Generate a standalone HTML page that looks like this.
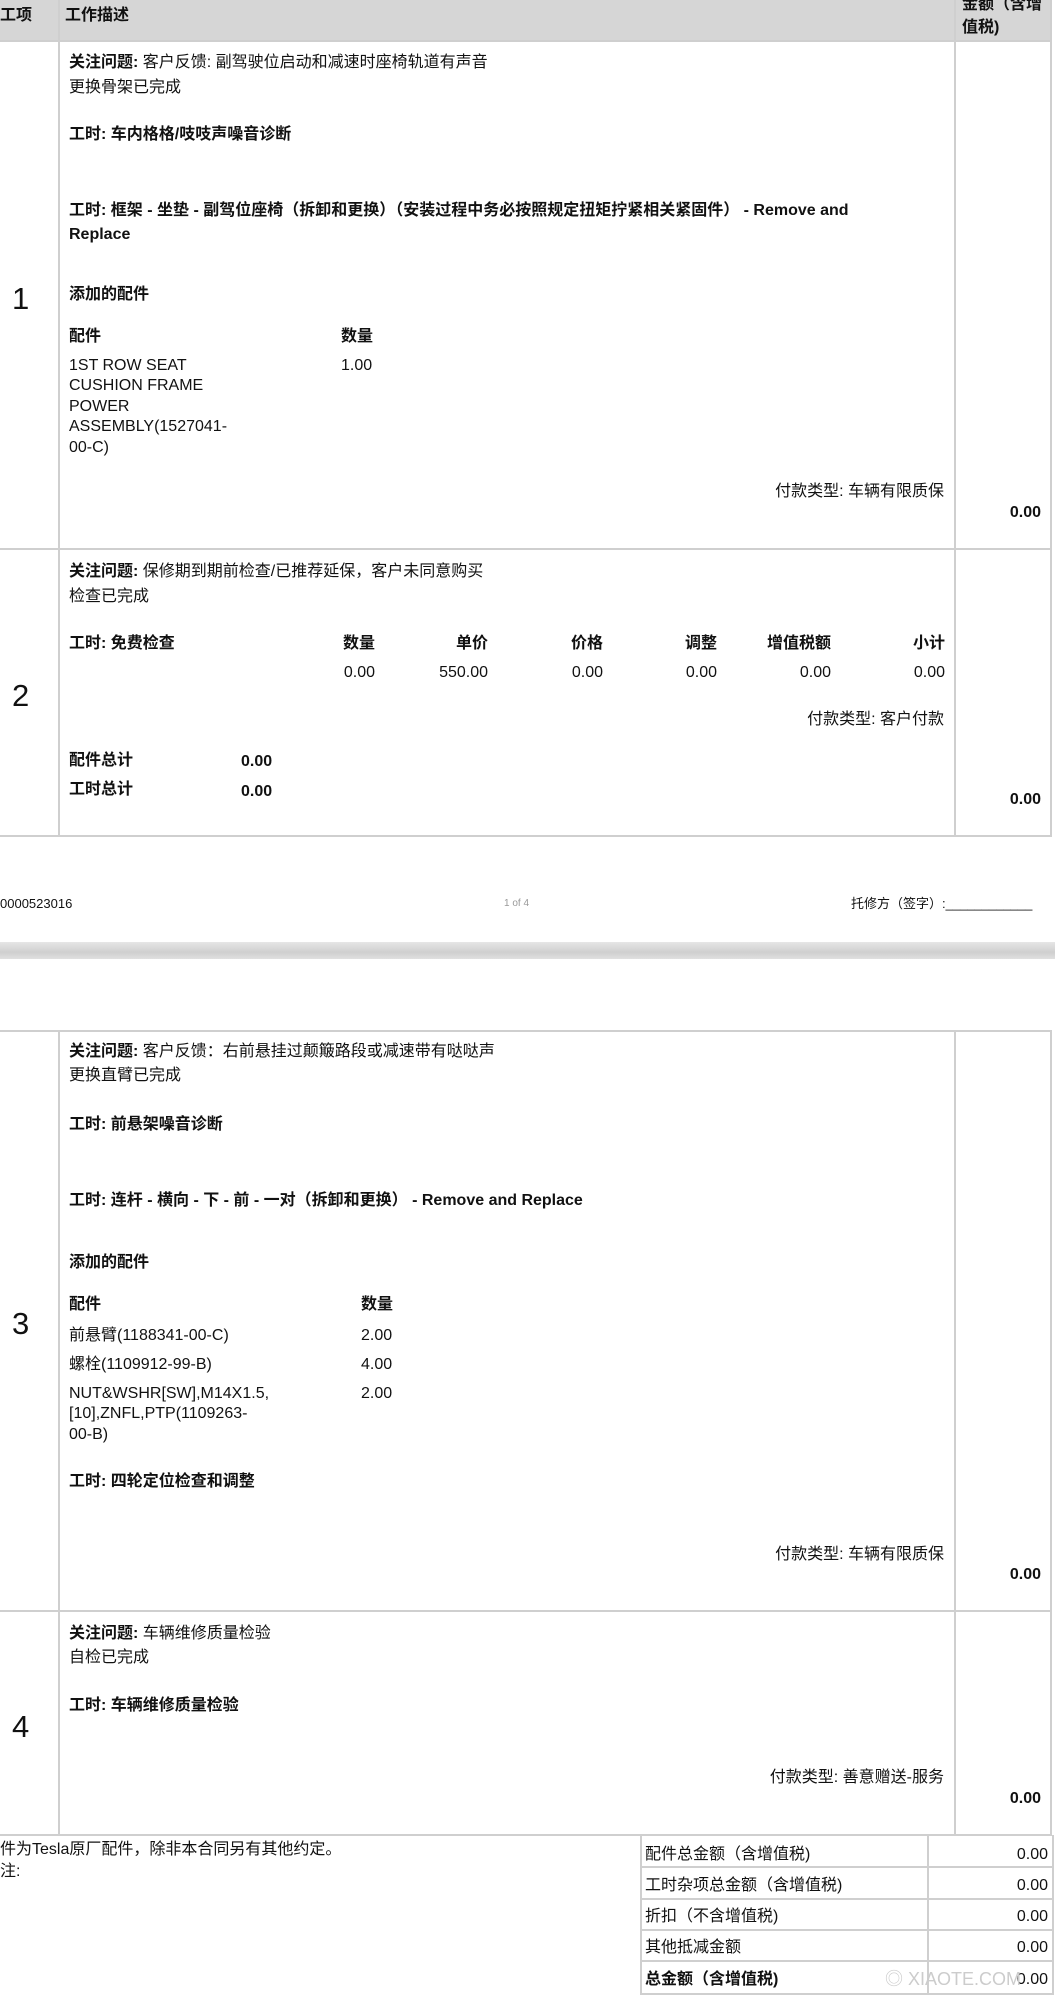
<!DOCTYPE html>
<html><head><meta charset="utf-8"><style>
body{margin:0;width:1055px;height:1999px;position:relative;background:#fff;overflow:hidden;font-family:"Liberation Sans","Noto Sans CJK SC",sans-serif;color:#111}
.t{position:absolute;white-space:nowrap;font-size:16px;line-height:20.4px;margin-top:3px}
.b{font-weight:bold}
.r{text-align:right}
.hl{position:absolute;height:2px;background:#cfcfcf}
.vl{position:absolute;width:2px;background:#cfcfcf}
.n{position:absolute;font-size:31px;line-height:34px;left:12px;margin-top:3px}
</style></head><body>
<!-- header -->
<div style="position:absolute;left:0;top:0;width:1050px;height:41px;background:#d6d6d6"></div>
<div class="t b" style="left:0;top:3px">工项</div>
<div class="t b" style="left:65px;top:3px">工作描述</div>
<div class="t b" style="left:962px;top:-8px">金额（含增</div>
<div class="t b" style="left:962px;top:15px">值税)</div>
<div class="hl" style="left:0;top:40px;width:1052px"></div>
<div class="vl" style="left:58px;top:0;height:836px"></div>
<div class="vl" style="left:954px;top:0;height:836px"></div>
<div class="vl" style="left:1050px;top:0;height:836px"></div>
<div class="hl" style="left:0;top:548px;width:1052px"></div>
<div class="hl" style="left:0;top:835px;width:1052px"></div>

<!-- row1 -->
<div class="n" style="top:279px">1</div>
<div class="t" style="left:69px;top:50px"><b>关注问题:</b> 客户反馈: 副驾驶位启动和减速时座椅轨道有声音</div>
<div class="t" style="left:69px;top:75px">更换骨架已完成</div>
<div class="t b" style="left:69px;top:122px">工时: 车内格格/吱吱声噪音诊断</div>
<div class="t b" style="left:69px;top:198px">工时: 框架 - 坐垫 - 副驾位座椅（拆卸和更换）（安装过程中务必按照规定扭矩拧紧相关紧固件） - Remove and</div>
<div class="t b" style="left:69px;top:222px">Replace</div>
<div class="t b" style="left:69px;top:282px">添加的配件</div>
<div class="t b" style="left:69px;top:324px">配件</div>
<div class="t b" style="left:341px;top:324px">数量</div>
<div class="t" style="left:69px;top:353px">1ST ROW SEAT<br>CUSHION FRAME<br>POWER<br>ASSEMBLY(1527041-<br>00-C)</div>
<div class="t" style="left:341px;top:353px">1.00</div>
<div class="t r" style="right:111px;top:479px">付款类型: 车辆有限质保</div>
<div class="t b r" style="right:14px;top:500px">0.00</div>

<!-- row2 -->
<div class="n" style="top:676px">2</div>
<div class="t" style="left:69px;top:559px"><b>关注问题:</b> 保修期到期前检查/已推荐延保，客户未同意购买</div>
<div class="t" style="left:69px;top:584px">检查已完成</div>
<div class="t b" style="left:69px;top:631px">工时: 免费检查</div>
<div class="t b r" style="right:680px;top:631px">数量</div>
<div class="t b r" style="right:567px;top:631px">单价</div>
<div class="t b r" style="right:452px;top:631px">价格</div>
<div class="t b r" style="right:338px;top:631px">调整</div>
<div class="t b r" style="right:224px;top:631px">增值税额</div>
<div class="t b r" style="right:110px;top:631px">小计</div>
<div class="t r" style="right:680px;top:660px">0.00</div>
<div class="t r" style="right:567px;top:660px">550.00</div>
<div class="t r" style="right:452px;top:660px">0.00</div>
<div class="t r" style="right:338px;top:660px">0.00</div>
<div class="t r" style="right:224px;top:660px">0.00</div>
<div class="t r" style="right:110px;top:660px">0.00</div>
<div class="t r" style="right:111px;top:707px">付款类型: 客户付款</div>
<div class="t b" style="left:69px;top:748px">配件总计</div>
<div class="t b" style="left:241px;top:749px">0.00</div>
<div class="t b" style="left:69px;top:777px">工时总计</div>
<div class="t b" style="left:241px;top:779px">0.00</div>
<div class="t b r" style="right:14px;top:787px">0.00</div>

<!-- footer -->
<div class="t" style="left:0;top:891px;font-size:13px">0000523016</div>
<div class="t" style="left:504px;top:891px;font-size:10px;color:#999">1 of 4</div>
<div class="t" style="left:851px;top:891px;font-size:13px">托修方（签字）:____________</div>
<div style="position:absolute;left:0;top:942px;width:1055px;height:17px;background:linear-gradient(#e6e6e6,#cfcfcf 60%,#e0e0e0)"></div>

<!-- page 2 table -->
<div class="hl" style="left:0;top:1030px;width:1052px"></div>
<div class="vl" style="left:58px;top:1030px;height:806px"></div>
<div class="vl" style="left:954px;top:1030px;height:806px"></div>
<div class="vl" style="left:1050px;top:1030px;height:806px"></div>
<div class="hl" style="left:0;top:1610px;width:1052px"></div>
<div class="hl" style="left:0;top:1834px;width:1052px"></div>

<div class="n" style="top:1304px">3</div>
<div class="t" style="left:69px;top:1039px"><b>关注问题:</b> 客户反馈：右前悬挂过颠簸路段或减速带有哒哒声</div>
<div class="t" style="left:69px;top:1063px">更换直臂已完成</div>
<div class="t b" style="left:69px;top:1112px">工时: 前悬架噪音诊断</div>
<div class="t b" style="left:69px;top:1188px">工时: 连杆 - 横向 - 下 - 前 - 一对（拆卸和更换） - Remove and Replace</div>
<div class="t b" style="left:69px;top:1250px">添加的配件</div>
<div class="t b" style="left:69px;top:1292px">配件</div>
<div class="t b" style="left:361px;top:1292px">数量</div>
<div class="t" style="left:69px;top:1323px">前悬臂(1188341-00-C)</div>
<div class="t" style="left:361px;top:1323px">2.00</div>
<div class="t" style="left:69px;top:1352px">螺栓(1109912-99-B)</div>
<div class="t" style="left:361px;top:1352px">4.00</div>
<div class="t" style="left:69px;top:1381px">NUT&amp;WSHR[SW],M14X1.5,<br>[10],ZNFL,PTP(1109263-<br>00-B)</div>
<div class="t" style="left:361px;top:1381px">2.00</div>
<div class="t b" style="left:69px;top:1469px">工时: 四轮定位检查和调整</div>
<div class="t r" style="right:111px;top:1542px">付款类型: 车辆有限质保</div>
<div class="t b r" style="right:14px;top:1562px">0.00</div>

<div class="n" style="top:1707px">4</div>
<div class="t" style="left:69px;top:1621px"><b>关注问题:</b> 车辆维修质量检验</div>
<div class="t" style="left:69px;top:1645px">自检已完成</div>
<div class="t b" style="left:69px;top:1693px">工时: 车辆维修质量检验</div>
<div class="t r" style="right:111px;top:1765px">付款类型: 善意赠送-服务</div>
<div class="t b r" style="right:14px;top:1786px">0.00</div>

<!-- bottom -->
<div class="t" style="left:0;top:1837px">件为Tesla原厂配件，除非本合同另有其他约定。</div>
<div class="t" style="left:0;top:1859px">注:</div>
<div style="position:absolute;left:640px;top:1835px;width:410px;height:158px;border:2px solid #cfcfcf;border-top:none"></div>
<div class="vl" style="left:927px;top:1835px;height:160px"></div>
<div class="hl" style="left:640px;top:1866px;width:412px"></div>
<div class="hl" style="left:640px;top:1898px;width:412px"></div>
<div class="hl" style="left:640px;top:1929px;width:412px"></div>
<div class="hl" style="left:640px;top:1960px;width:412px"></div>
<div class="t" style="left:645px;top:1842px">配件总金额（含增值税)</div>
<div class="t r" style="right:7px;top:1842px">0.00</div>
<div class="t" style="left:645px;top:1873px">工时杂项总金额（含增值税)</div>
<div class="t r" style="right:7px;top:1873px">0.00</div>
<div class="t" style="left:645px;top:1904px">折扣（不含增值税)</div>
<div class="t r" style="right:7px;top:1904px">0.00</div>
<div class="t" style="left:645px;top:1935px">其他抵减金额</div>
<div class="t r" style="right:7px;top:1935px">0.00</div>
<div class="t b" style="left:645px;top:1967px">总金额（含增值税)</div>
<div class="t r" style="right:7px;top:1967px">0.00</div>
<div class="t" style="left:885px;top:1966px;color:#ccc;font-size:18px">◎ XIAOTE.COM</div>
</body></html>
